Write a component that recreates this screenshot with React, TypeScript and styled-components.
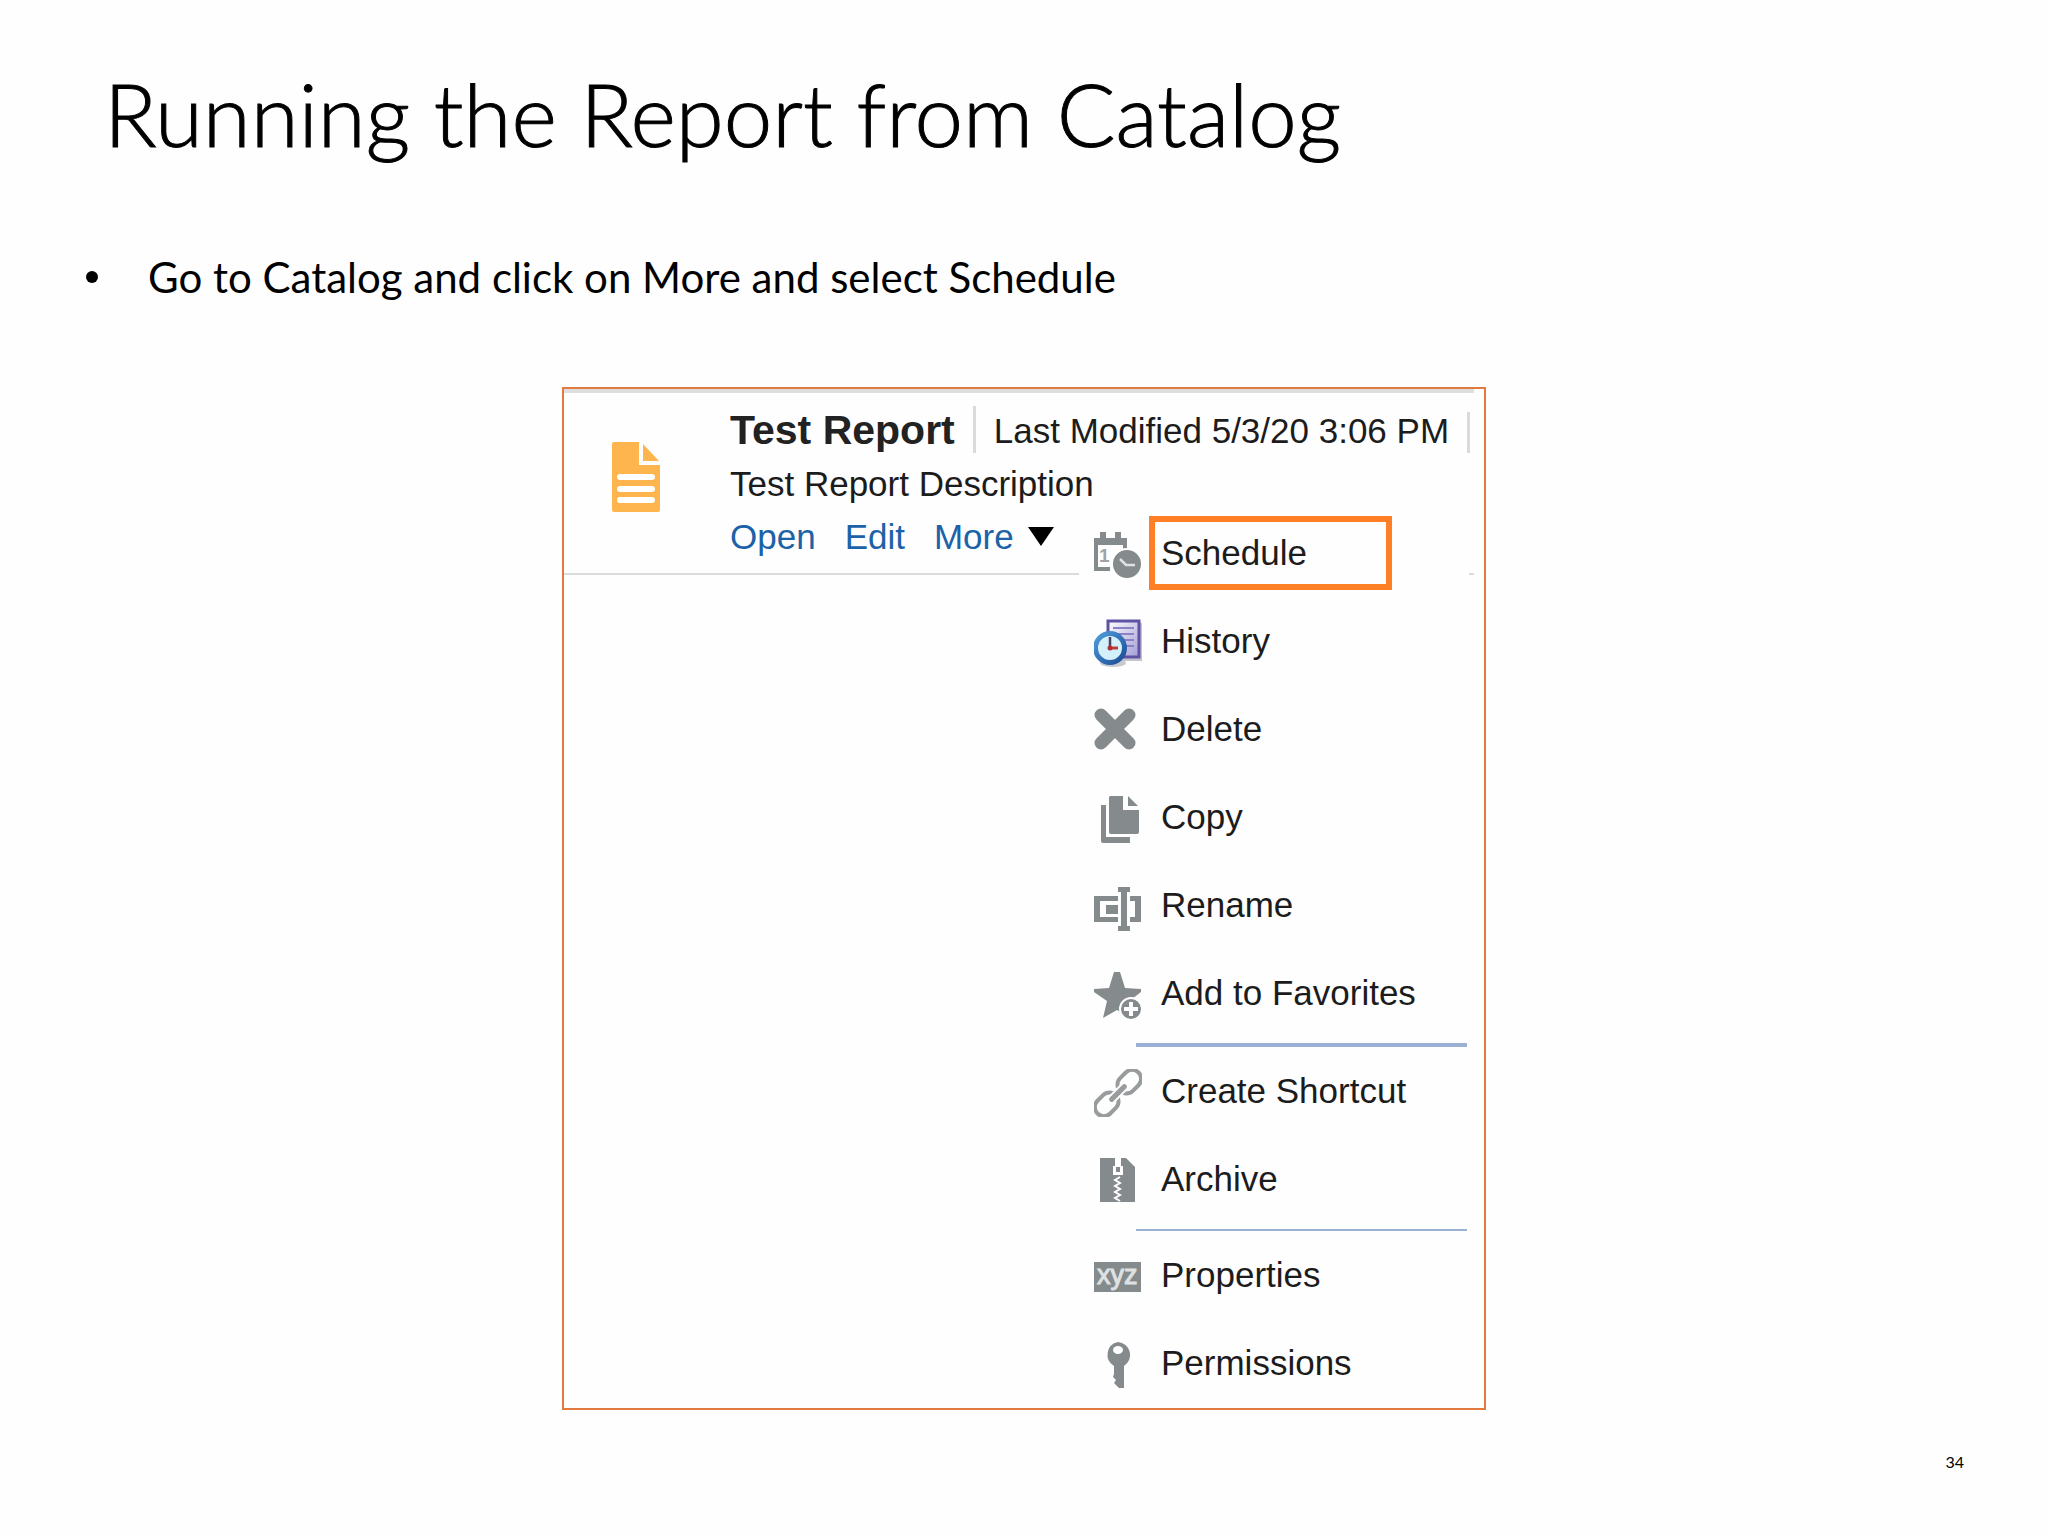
import React from "react";
import styled, { createGlobalStyle } from "styled-components";

const GREY = "#858a8c";

const GlobalStyle = createGlobalStyle`
  *, *::before, *::after { box-sizing: border-box; }
  body {
    margin: 0;
    background: #fefefe;
    color: #000;
    font-family: Lato, "Open Sans", sans-serif;
  }
`;

const Slide = styled.main`
  display: flex;
  flex-direction: column;
  min-height: 100vh;
  padding: 54px 84px 62px;
`;

const Title = styled.h1`
  margin: 0;
  padding-left: 20px;
  font-size: 87px;
  font-weight: 300;
  line-height: 120px;
  -webkit-text-stroke: 1px #000;
`;

const Bullets = styled.ul`
  margin: 73px 0 0;
  padding: 0;
  list-style: none;
  font-size: 42px;
  line-height: 60px;
`;

const Bullet = styled.li`
  display: flex;
  align-items: center;
  gap: 50px;

  &::before {
    content: "";
    width: 12px;
    height: 12px;
    margin-left: 2px;
    border-radius: 50%;
    background: #000;
  }
`;

const Panel = styled.section`
  width: 924px;
  max-width: 100%;
  margin: 80px auto 0;
  padding-bottom: 1px;
  border: 2px solid #e27a40;
  background: #fefefe;
  color: #1c1c1c;
  font-family: "Liberation Sans", Arial, sans-serif;
  font-size: 35px;
`;

const Entry = styled.article`
  display: flex;
  margin-right: 10px;
  padding: 11px 0 10px 48px;
  border-top: 4px solid #dedede;
  border-bottom: 2px solid #d9dbdc;
`;

const FileIcon = styled.svg`
  flex: none;
  width: 48px;
  height: 70px;
  margin: 38px 70px 0 0;
`;

const Details = styled.div`
  flex: 1;
  min-width: 0;
  line-height: 53px;
  white-space: nowrap;
`;

const Heading = styled.div`
  display: flex;
  align-items: center;
  height: 53px;
`;

const Name = styled.h2`
  margin: 0;
  font-size: 41px;
  line-height: 53px;
  color: #222;
`;

const Rule = styled.span<{ $height: number }>`
  flex: none;
  align-self: flex-end;
  width: 3px;
  height: ${(p) => p.$height}px;
  margin: 0 18px 4px;
  background: #d8dbde;

  &:last-child {
    margin-right: 0;
  }
`;

const Description = styled.p`
  margin: 0;
`;

const Actions = styled.nav`
  display: flex;
  gap: 29px;
`;

const ActionLink = styled.a`
  color: #1c62a8;
  text-decoration: none;
`;

const MoreButton = styled.button`
  display: flex;
  align-items: center;
  gap: 14px;
  padding: 0;
  border: 0;
  background: none;
  color: #1c62a8;
  font: inherit;
`;

const Caret = styled.svg`
  width: 26px;
  height: 19px;
`;

const Menu = styled.div`
  position: relative;
  width: 390px;
  margin: -66px 0 0 515px;
  padding-left: 15px;
  background: #fefefe;
`;

const Item = styled.button`
  display: flex;
  align-items: center;
  gap: 7px;
  width: 100%;
  height: 88px;
  padding: 0;
  border: 0;
  background: none;
  color: inherit;
  font: inherit;
  text-align: left;
`;

const ItemIcon = styled.svg`
  flex: none;
  width: 48px;
  height: 48px;
  margin-top: 4px;
`;

const Label = styled.span<{ $marked: boolean }>`
  width: ${(p) => (p.$marked ? "243px" : "auto")};
  padding-left: 6px;
  border: 6px solid ${(p) => (p.$marked ? "#ff7f27" : "transparent")};
  line-height: 62px;
  white-space: nowrap;
`;

const Separator = styled.hr<{ $weight: number }>`
  height: ${(p) => p.$weight}px;
  margin: 6px 2px 0 42px;
  border: 0;
  background: #9ab1d4;
`;

const PageNumber = styled.footer`
  margin-top: auto;
  font-size: 16px;
  line-height: 24px;
  text-align: right;
`;

const icons: Record<string, React.ReactNode> = {
  Schedule: (
    <>
      <path d="M0 7H6V1h6v6h9V1h6v6h6v14h-4v-7H4v22h12v4H0z" fill={GREY} />
      <text x="5" y="31" fontSize="19" fontWeight="bold" fill="#9fa3a5">1</text>
      <circle cx="33" cy="33" r="15" fill={GREY} stroke="#fff" strokeWidth="2" />
      <path d="M26 28l6 6h9" fill="none" stroke="#dfe1e2" strokeWidth="2.5" />
    </>
  ),
  History: (
    <>
      <defs>
        <linearGradient id="page" x1="0" y1="0" x2="1" y2="1">
          <stop offset="0" stopColor="#fff" />
          <stop offset="1" stopColor="#a39cd6" />
        </linearGradient>
        <linearGradient id="ring" x1="0" y1="0" x2="1" y2="1">
          <stop offset="0" stopColor="#4f9ddd" />
          <stop offset="1" stopColor="#1c4c96" />
        </linearGradient>
      </defs>
      <path d="M16 4h32v38H16z" fill="#c4c4cc" />
      <path d="M14 2h31v36H14z" fill="url(#page)" stroke="#5d52a3" strokeWidth="3" />
      <path d="M19 9h21M19 15h21M24 21h16M28 27h12" stroke="#8a82c4" strokeWidth="2" />
      <ellipse cx="19" cy="44" rx="13" ry="4" fill="#c6c9d0" />
      <circle cx="16" cy="29" r="14.5" fill="#d4f0fa" stroke="url(#ring)" strokeWidth="5" />
      <path d="M16 18v11" stroke="#4c4463" strokeWidth="2.5" />
      <path d="M15 29h9" stroke="#c23b3b" strokeWidth="3" />
      <circle cx="16" cy="29" r="2.5" fill="#b03038" />
    </>
  ),
  Delete: (
    <path d="M7 8l28 28M35 8L7 36" stroke={GREY} strokeWidth="13" strokeLinecap="round" />
  ),
  Copy: (
    <g fill={GREY}>
      <path d="M7 10h5v32h24v6H9a2 2 0 0 1-2-2z" />
      <path d="M16 1h13v14h16v22a2 2 0 0 1-2 2H17a2 2 0 0 1-2-2V2z" />
      <path d="M34 1l10 10H34z" />
    </g>
  ),
  Rename: (
    <g fill={GREY}>
      <path d="M0 13h24v5H6v16h18v5H0z" />
      <path d="M12 22h12v9H12z" />
      <path d="M24 4h12v5h-3v34h3v5H24v-5h3V9h-3z" />
      <path d="M36 13h11v26H36v-5h5V18h-5z" />
    </g>
  ),
  "Add to Favorites": (
    <>
      <path d="M20 1h6l5 16 16 1v3L34 31l3 16-14-8-14 8 4-17L0 21v-3l15-1z" fill={GREY} />
      <circle cx="37" cy="38" r="11" fill={GREY} stroke="#fff" strokeWidth="2" />
      <path d="M37 31v14M30 38h14" stroke="#fff" strokeWidth="4" />
    </>
  ),
  "Create Shortcut": (
    <g fill="none" stroke="#999c9d" strokeWidth="4" strokeLinecap="round" transform="rotate(-45 24 24)">
      <rect x="-5" y="15" width="26" height="18" rx="9" />
      <rect x="27" y="15" width="26" height="18" rx="9" />
      <path d="M15 24h18" stroke="#fff" strokeWidth="9" />
      <path d="M15 24h18" strokeWidth="5" />
    </g>
  ),
  Archive: (
    <>
      <path d="M6 1h26l9 9v35H6z" fill={GREY} />
      <path d="M21 1h6v8h2v9H19V9h2z" fill="#fff" />
      <path d="M22 10h4v5h-4z" fill={GREY} />
      <path d="M26 20l-5 3 5 3-5 3 5 3-5 3 5 3-5 3 5 3" fill="none" stroke="#fff" strokeWidth="2" />
    </>
  ),
  Properties: (
    <>
      <path d="M0 9h47v30H0z" fill={GREY} />
      <text x="3" y="31" fontSize="27" fill="#dfe1e2" stroke="#dfe1e2" strokeWidth="1">xyz</text>
    </>
  ),
  Permissions: (
    <>
      <path d="M24 1a13 13 0 0 1 6 24V47h-5l-5-5 2-3-3-3 1-3V25A13 13 0 0 1 24 1z" fill={GREY} />
      <ellipse cx="24" cy="9" rx="5" ry="4" fill="#fff" />
    </>
  ),
};

const groups = [
  ["Schedule", "History", "Delete", "Copy", "Rename", "Add to Favorites"],
  ["Create Shortcut", "Archive"],
  ["Properties", "Permissions"],
];

export default function App() {
  return (
    <>
      <GlobalStyle />
      <Slide>
        <Title>Running the Report from Catalog</Title>
        <Bullets>
          <Bullet>Go to Catalog and click on More and select Schedule</Bullet>
        </Bullets>
        <Panel>
          <Entry>
            <FileIcon viewBox="0 0 48 70" aria-hidden="true">
              <path d="M2 0h25v23h21v45a2 2 0 0 1-2 2H2a2 2 0 0 1-2-2V2a2 2 0 0 1 2-2z" fill="#ffb54d" />
              <path d="M31 2l16 17H31z" fill="#ffb54d" />
              <path d="M8 35h32M8 47h32M8 58h32" stroke="#fff" strokeWidth="6" strokeLinecap="round" />
            </FileIcon>
            <Details>
              <Heading>
                <Name>Test Report</Name>
                <Rule $height={47} />
                <span>Last Modified 5/3/20 3:06 PM</span>
                <Rule $height={41} />
              </Heading>
              <Description>Test Report Description</Description>
              <Actions>
                <ActionLink href="#open">Open</ActionLink>
                <ActionLink href="#edit">Edit</ActionLink>
                <MoreButton type="button" aria-haspopup="menu" aria-expanded="true">
                  More
                  <Caret viewBox="0 0 26 19" aria-hidden="true">
                    <path d="M0 0h26L13 19z" fill="#000" />
                  </Caret>
                </MoreButton>
              </Actions>
            </Details>
          </Entry>
          <Menu role="menu">
            {groups.map((group, index) => (
              <React.Fragment key={group[0]}>
                {index > 0 && <Separator $weight={index === 1 ? 4 : 2} />}
                {group.map((name) => (
                  <Item key={name} type="button" role="menuitem">
                    <ItemIcon viewBox="0 0 48 48" aria-hidden="true">
                      {icons[name]}
                    </ItemIcon>
                    <Label $marked={name === "Schedule"}>{name}</Label>
                  </Item>
                ))}
              </React.Fragment>
            ))}
          </Menu>
        </Panel>
        <PageNumber>34</PageNumber>
      </Slide>
    </>
  );
}
